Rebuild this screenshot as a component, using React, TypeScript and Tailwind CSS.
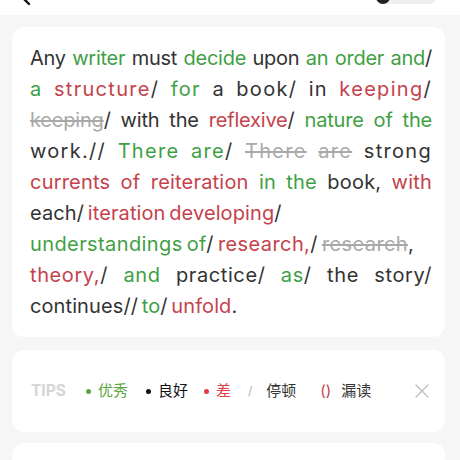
import { FC, ReactNode } from "react";

type Tone = "n" | "g" | "r" | "s";

const toneClass: Record<Tone, string> = {
  n: "text-[#333333]",
  g: "text-[#3f9f45]",
  r: "text-[#c4424c]",
  s: "text-[#a9a9a9] line-through decoration-[#a9a9a9]",
};

// each line of the passage: colored pieces, plus how it is set
const lines: { cls: string; parts: [Tone, string][] }[] = [
  {
    cls: "tracking-[-0.25px] text-justify [text-align-last:justify]",
    parts: [
      ["n", "Any "],
      ["g", "writer"],
      ["n", " must "],
      ["g", "decide"],
      ["n", " upon "],
      ["g", "an order and"],
      ["n", "/"],
    ],
  },
  {
    cls: "tracking-[1.3px] text-justify [text-align-last:justify]",
    parts: [
      ["g", "a "],
      ["r", "structure"],
      ["n", "/ "],
      ["g", "for"],
      ["n", " a book/ in "],
      ["r", "keeping"],
      ["n", "/"],
    ],
  },
  {
    cls: "tracking-[-0.2px] text-justify [text-align-last:justify]",
    parts: [
      ["s", "keeping"],
      ["n", "/ with the "],
      ["r", "reflexive"],
      ["n", "/ "],
      ["g", "nature of the"],
    ],
  },
  {
    cls: "tracking-[1.3px] text-justify [text-align-last:justify]",
    parts: [
      ["n", "work.// "],
      ["g", "There are"],
      ["n", "/ "],
      ["s", "There"],
      ["n", " "],
      ["s", "are"],
      ["n", " strong"],
    ],
  },
  {
    cls: "tracking-[0.2px] text-justify [text-align-last:justify]",
    parts: [
      ["r", "currents of reiteration "],
      ["g", "in the"],
      ["n", " book, "],
      ["r", "with"],
    ],
  },
  {
    cls: "tracking-[0.1px] [word-spacing:-2px]",
    parts: [
      ["n", "each/ "],
      ["r", "iteration developing"],
      ["n", "/"],
    ],
  },
  {
    cls: "tracking-[0.4px] [word-spacing:-2px]",
    parts: [
      ["g", "understandings of"],
      ["n", "/ "],
      ["r", "research,"],
      ["n", "/ "],
      ["s", "research"],
      ["n", ","],
    ],
  },
  {
    cls: "tracking-[0.6px] text-justify [text-align-last:justify]",
    parts: [
      ["r", "theory,"],
      ["n", "/ "],
      ["g", "and"],
      ["n", " practice/ "],
      ["g", "as"],
      ["n", "/ the story/"],
    ],
  },
  {
    cls: "tracking-[0.1px] [word-spacing:-2px]",
    parts: [
      ["n", "continues// "],
      ["g", "to"],
      ["n", "/ "],
      ["r", "unfold"],
      ["n", "."],
    ],
  },
];

const Card: FC<{ children: ReactNode; className?: string }> = ({ children, className }) => (
  <div className={`ml-3 mr-[15px] rounded-xl bg-white ${className ?? ""}`}>{children}</div>
);

const Dot: FC<{ color: string }> = ({ color }) => (
  <span className={`mr-[7px] h-[5px] w-[5px] rounded-full ${color}`} />
);

const App: FC = () => {
  return (
    <div
      className="h-[460px] w-[460px] overflow-hidden bg-[#f6f6f6]"
      style={{ fontFamily: "Inter, 'Noto Sans CJK SC', sans-serif" }}
    >
      {/* top nav bar, mostly scrolled out of view */}
      <div className="relative h-[15px] overflow-hidden bg-white">
        <svg className="absolute left-[18px] top-[-14px]" width="14" height="20" viewBox="0 0 14 20">
          <path d="M11 2 L3 10 L11 18" fill="none" stroke="#111" strokeWidth="2.4" strokeLinecap="round" strokeLinejoin="round" />
        </svg>
        <div className="absolute left-[376px] top-[-10px] flex h-[14px] w-[60px] items-center rounded-full bg-[#efefef]">
          <div className="h-[14px] w-[14px] rounded-full bg-[#222]" />
        </div>
      </div>

      <Card className="mt-3 pl-[18px] pr-[13px] pt-[16px] pb-[15px]">
        <div className="text-[20px] leading-[31px]">
          {lines.map((line, i) => (
            <div key={i} className={`whitespace-nowrap ${line.cls}`}>
              {line.parts.map(([tone, text], j) => (
                <span key={j} className={toneClass[tone]}>
                  {text}
                </span>
              ))}
            </div>
          ))}
        </div>
      </Card>

      <Card className="mt-[13px] flex h-[82px] items-center pl-[19px] pr-[15px] text-[15px]">
        <span className="mr-[20px] text-[15.5px] font-bold text-[#d6d6d6]">TIPS</span>
        <span className="mr-[18px] flex items-center text-[#5aa83c]">
          <Dot color="bg-[#5aa83c]" />
          优秀
        </span>
        <span className="mr-[16px] flex items-center text-[#111]">
          <Dot color="bg-[#111]" />
          良好
        </span>
        <span className="mr-[17px] flex items-center text-[#e23c47]">
          <Dot color="bg-[#e23c47]" />
          差
        </span>
        <span className="mr-[14px] text-[12px] text-[#b5b5b5]">/</span>
        <span className="mr-[24px] text-[#333]">停顿</span>
        <span className="mr-[10px] text-[#c0404a]">()</span>
        <span className="text-[#333]">漏读</span>
        <svg className="ml-auto" width="16" height="16" viewBox="0 0 16 16">
          <path d="M2 2 L14 14 M14 2 L2 14" stroke="#bdbdbd" strokeWidth="1.3" strokeLinecap="round" />
        </svg>
      </Card>

      <Card className="mt-[11px] h-[40px]">
        <div />
      </Card>
    </div>
  );
};

export default App;
